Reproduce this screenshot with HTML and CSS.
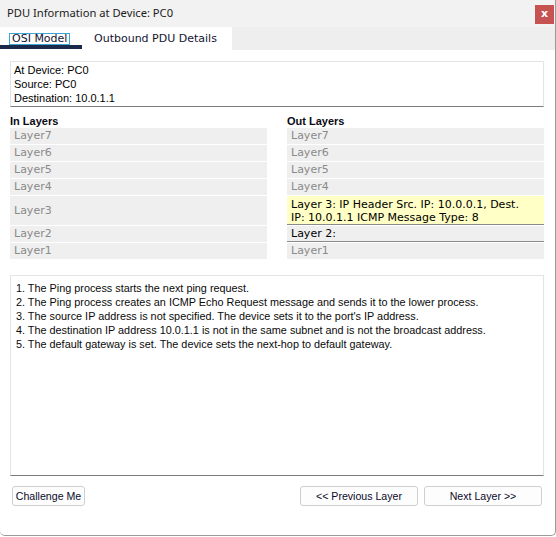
FILE: index.html
```html
<!DOCTYPE html>
<html>
<head>
<meta charset="utf-8">
<title>PDU Information at Device: PC0</title>
<link rel="stylesheet" href="styles.css">
</head>
<body>
<div class="window">
  <div class="titlebar">
    <span class="title">PDU Information at Device: PC0</span>
    <span class="close">x</span>
  </div>
  <div class="tabbar">
    <div class="tab tab-active">
      <span class="focus-label">OSI Model</span>
      <span class="tab-underline"></span>
    </div>
    <div class="tab tab-other">Outbound PDU Details</div>
  </div>
  <div class="content">
    <div class="frame info">
      <div>At Device: PC0</div>
      <div>Source: PC0</div>
      <div>Destination: 10.0.1.1</div>
    </div>
    <div class="columns">
      <div class="col">
        <div class="col-head">In Layers</div>
        <div class="layers">
          <div class="layer">Layer7</div>
          <div class="layer">Layer6</div>
          <div class="layer">Layer5</div>
          <div class="layer">Layer4</div>
          <div class="layer layer-tall layer-mid">Layer3</div>
          <div class="layer">Layer2</div>
          <div class="layer">Layer1</div>
        </div>
      </div>
      <div class="col">
        <div class="col-head">Out Layers</div>
        <div class="layers">
          <div class="layer">Layer7</div>
          <div class="layer">Layer6</div>
          <div class="layer">Layer5</div>
          <div class="layer">Layer4</div>
          <div class="layer layer-tall layer-hl">Layer 3: IP Header Src. IP: 10.0.0.1, Dest. IP: 10.0.1.1 ICMP Message Type: 8</div>
          <div class="layer layer-active">Layer 2:</div>
          <div class="layer">Layer1</div>
        </div>
      </div>
    </div>
    <div class="frame desc">
      <div>1. The Ping process starts the next ping request.</div>
      <div>2. The Ping process creates an ICMP Echo Request message and sends it to the lower process.</div>
      <div>3. The source IP address is not specified. The device sets it to the port's IP address.</div>
      <div>4. The destination IP address 10.0.1.1 is not in the same subnet and is not the broadcast address.</div>
      <div>5. The default gateway is set. The device sets the next-hop to default gateway.</div>
    </div>
    <div class="buttons">
      <button class="btn btn-challenge">Challenge Me</button>
      <div class="nav">
        <button class="btn btn-nav">&lt;&lt; Previous Layer</button>
        <button class="btn btn-nav">Next Layer &gt;&gt;</button>
      </div>
    </div>
  </div>
</div>
</body>
</html>
```
FILE: styles.css
```css
* { box-sizing: border-box; }
html, body { margin: 0; padding: 0; background: #ffffff; }
body { font-family: "Liberation Sans", Arial, sans-serif; font-size: 11px; color: #000; }

.window {
  width: 556px;
  height: 536px;
  background: #ffffff;
  border-right: 1px solid #9a9a9a;
  border-bottom: 1px solid #9a9a9a;
  border-bottom-right-radius: 5px;
  border-bottom-left-radius: 5px;
  display: flex;
  flex-direction: column;
  overflow: hidden;
}

.titlebar {
  height: 27px;
  background: #f2f2f2;
  display: flex;
  align-items: center;
  justify-content: space-between;
  padding-left: 7px;
  padding-right: 1px;
}
.title {
  font-family: "Noto Sans", "Open Sans", sans-serif;
  font-size: 11.2px;
  color: #1a1a1a;
  margin-top: -2px;
}
.close {
  width: 19px;
  height: 19px;
  margin-top: 1px;
  background: #c75252;
  color: #ffffff;
  font-family: "DejaVu Sans", sans-serif;
  font-weight: bold;
  font-size: 11px;
  line-height: 17px;
  text-align: center;
}

.tabbar {
  height: 23px;
  background: #eeeeee;
  display: flex;
}
.tab {
  height: 23px;
  background: #ffffff;
  font-family: "DejaVu Sans", Verdana, sans-serif;
  font-size: 11px;
  color: #141432;
}
.tab-active {
  width: 82px;
  display: flex;
  flex-direction: column;
  align-items: flex-start;
  padding-top: 6px;
}
.focus-label {
  margin-left: 9px;
  border: 1px solid #3fa4d8;
  padding: 0 2px;
  line-height: 10px;
  height: 12px;
}
.tab-underline {
  display: block;
  width: 82px;
  height: 4px;
  background: #1b2a4b;
}
.tab-other {
  width: 150px;
  padding-left: 12px;
  line-height: 23px;
}

.content {
  flex: 1;
  display: flex;
  flex-direction: column;
  padding: 11px 11px 0 10px;
}

.frame {
  border: 1px solid #e3e3e3;
  border-bottom-color: #7c7c7c;
  background: #ffffff;
}
.info {
  width: 534px;
  height: 46px;
  padding: 1px 3px;
  line-height: 14px;
}

.columns {
  display: flex;
  gap: 20px;
  margin-top: 7px;
}
.col { width: 257px; }
.col-head {
  font-weight: bold;
  line-height: 14px;
  color: #0a0a14;
}
.layers {
  display: flex;
  flex-direction: column;
  gap: 1px;
}
.layer {
  height: 16px;
  background: #efefef;
  padding-left: 4px;
  font-family: "DejaVu Sans", Verdana, sans-serif;
  font-size: 11px;
  line-height: 16px;
  color: #8a8a8a;
}
.layer-tall { height: 29px; }
.layer-mid { line-height: 29px; }
.layer-hl {
  background: #ffffc6;
  color: #000000;
  line-height: 13px;
  padding-top: 2px;
  padding-right: 10px;
  border-bottom: 1px solid #8a8a8a;
}
.layer-active {
  color: #000000;
  border-bottom: 1px solid #8a8a8a;
}

.desc {
  width: 534px;
  height: 201px;
  margin-top: 16px;
  padding: 5px 5px;
  line-height: 14px;
  font-size: 10.85px;
  color: #0a0a0a;
}

.buttons {
  display: flex;
  justify-content: space-between;
  margin-top: 10px;
  width: 534px;
  padding: 0 2px;
}
.nav { display: flex; gap: 6px; }
.btn {
  height: 20px;
  background: #fdfdfd;
  border: 1px solid #cfcfcf;
  border-radius: 3px;
  font-family: "Liberation Sans", Arial, sans-serif;
  font-size: 10.6px;
  color: #0a0a2a;
  padding: 0;
  line-height: 18px;
}
.btn-challenge { width: 73px; }
.btn-nav { width: 118px; }
```
